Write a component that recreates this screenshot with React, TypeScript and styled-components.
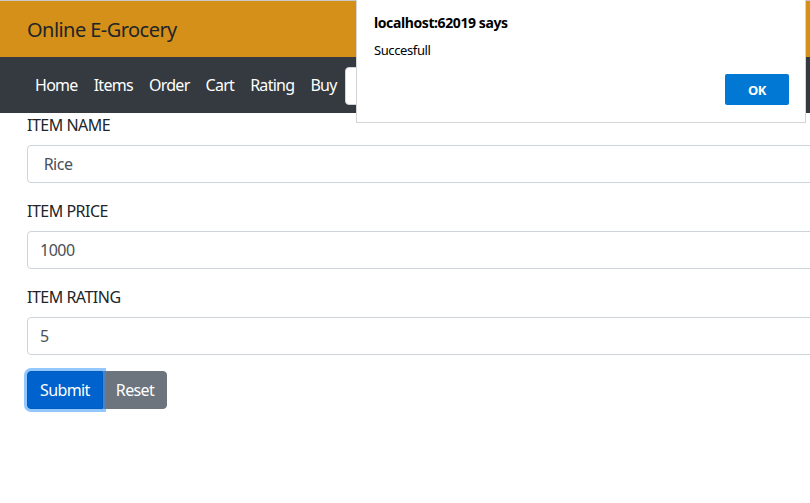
import React from "react";
import styled, { createGlobalStyle } from "styled-components";

const Global = createGlobalStyle`
  html, body { margin: 0; padding: 0; overflow: hidden; background: #fff; }
  body { font-family: "Segoe UI", "Noto Sans", "Open Sans", sans-serif; color: #212529; letter-spacing: -0.5px; }
  * { box-sizing: border-box; }
`;

const Page = styled.div`
  width: 810px;
  height: 503px;
  position: relative;
  overflow: hidden;
`;

const Header = styled.header`
  height: 57px;
  background: #d49018;
  border-top: 1px solid #c8c8c8;
  display: flex;
  align-items: center;
  padding-left: 27px;
`;

const Title = styled.h4`
  margin: 0;
  font-size: 20px;
  font-weight: 400;
  color: #212529;
  line-height: 1.2;
  letter-spacing: -0.55px;
  padding-top: 1px;
`;

const Nav = styled.nav`
  height: 56px;
  background: #343a40;
  display: flex;
  align-items: center;
  padding-left: 27px;
`;

const NavLink = styled.a`
  color: #fff;
  font-size: 16px;
  padding: 0 8px;
  line-height: 24px;
  text-decoration: none;
  letter-spacing: -0.72px;
`;

const Search = styled.input`
  width: 300px;
  height: 38px;
  border: 1px solid #ced4da;
  border-radius: 4px;
  background: #fff;
  margin-top: 1px;
`;

const Form = styled.form`
  padding-left: 27px;
  width: 1100px;
`;

const Group = styled.div`
  margin-bottom: 16px;
`;

const Label = styled.label`
  display: block;
  font-size: 16px;
  line-height: 24px;
  margin-bottom: 8px;
  color: #212529;
`;

const Field = styled.input`
  display: block;
  width: 100%;
  height: 38px;
  padding: 6px 12px;
  font-size: 16px;
  line-height: 24px;
  font-family: inherit;
  letter-spacing: inherit;
  color: #495057;
  background: #fff;
  border: 1px solid #ced4da;
  border-radius: 4px;
  outline: none;
`;

const BtnGroup = styled.div`
  display: inline-flex;
`;

const Btn = styled.button<{ $variant: "primary" | "secondary" }>`
  position: relative;
  height: 38px;
  padding: 6px 12px;
  font-family: inherit;
  letter-spacing: -0.6px;
  font-size: 16px;
  line-height: 24px;
  color: #fff;
  border: 1px solid ${(p) => (p.$variant === "primary" ? "#005cbf" : "#6c757d")};
  background: ${(p) => (p.$variant === "primary" ? "#0062cc" : "#6c757d")};
  border-radius: ${(p) => (p.$variant === "primary" ? "4px 0 0 4px" : "0 4px 4px 0")};
  z-index: ${(p) => (p.$variant === "primary" ? 1 : 0)};
  box-shadow: ${(p) => (p.$variant === "primary" ? "0 0 0 3px rgba(38,143,255,0.5)" : "none")};
  cursor: pointer;
`;

const Dialog = styled.div`
  position: absolute;
  left: 356px;
  top: 0;
  width: 450px;
  height: 123px;
  background: #fff;
  border: 1px solid #d4d4d4;
  border-top: none;
  padding: 13px 16px 0 17px;
  display: flex;
  flex-direction: column;
  letter-spacing: -0.4px;
`;

const DialogTitle = styled.div`
  font-size: 14px;
  font-weight: 700;
  color: #000;
  line-height: 20px;
`;

const DialogMsg = styled.div`
  margin-top: 8px;
  font-size: 13px;
  color: #000;
  line-height: 18px;
`;

const DialogFooter = styled.div`
  display: flex;
  justify-content: flex-end;
  margin-top: 15px;
`;

const OkButton = styled.button`
  width: 64px;
  height: 31px;
  background: #0078d4;
  color: #fff;
  border: none;
  border-radius: 2px;
  font-family: inherit;
  letter-spacing: inherit;
  font-weight: 700;
  font-size: 13px;
`;

export default function App() {
  return (
    <Page>
      <Global />
      <Header>
        <Title>Online E-Grocery</Title>
      </Header>
      <Nav>
        <NavLink>Home</NavLink>
        <NavLink>Items</NavLink>
        <NavLink>Order</NavLink>
        <NavLink>Cart</NavLink>
        <NavLink>Rating</NavLink>
        <NavLink>Buy</NavLink>
        <Search />
      </Nav>
      <Form>
        <Group>
          <Label>ITEM NAME</Label>
          <Field defaultValue=" Rice" />
        </Group>
        <Group>
          <Label>ITEM PRICE</Label>
          <Field defaultValue="1000" />
        </Group>
        <Group>
          <Label>ITEM RATING</Label>
          <Field defaultValue="5" />
        </Group>
        <BtnGroup>
          <Btn type="button" $variant="primary">Submit</Btn>
          <Btn type="button" $variant="secondary">Reset</Btn>
        </BtnGroup>
      </Form>
      <Dialog>
        <DialogTitle>localhost:62019 says</DialogTitle>
        <DialogMsg>Succesfull</DialogMsg>
        <DialogFooter>
          <OkButton>OK</OkButton>
        </DialogFooter>
      </Dialog>
    </Page>
  );
}
